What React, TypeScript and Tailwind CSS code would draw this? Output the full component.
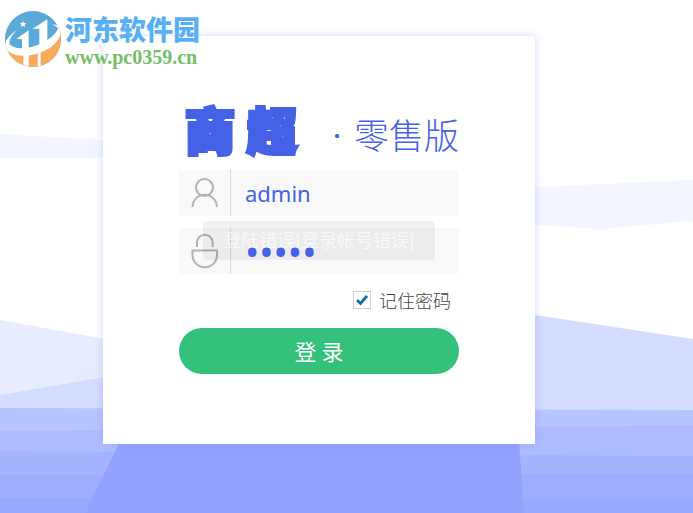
import React, { useState } from 'react';

function Backdrop() {
  return (
    <svg
      className="absolute inset-0 -z-10 h-full w-full"
      viewBox="0 0 693 513"
      preserveAspectRatio="none"
      aria-hidden="true"
    >
      <rect width="693" height="513" fill="#ffffff" />
      <path d="M0 134L103 140L535 187L693 180V221L600 229L535 225L103 158H0Z" fill="#f3f6ff" />
      <path d="M0 320L320 378V410H0Z" fill="#e8ecff" />
      <path d="M0 395L320 340L535 315L693 339V412H0Z" fill="#d4dcff" />
      <path d="M0 408L693 410V513H0Z" fill="#b9c4ff" />
      <path d="M0 431L103 430L535 427L693 425V513H0Z" fill="#afbbff" />
      <path d="M0 451L535 455L693 456V513H0Z" fill="#a6b3ff" />
      <path d="M0 475L693 474V513H0Z" fill="#9fadff" />
      <path d="M0 498L693 499V513H0Z" fill="#99a8ff" />
      <path d="M128 425H518L524 513H85Z" fill="#93a2ff" />
    </svg>
  );
}

function SiteLogo() {
  return (
    <svg className="h-14 w-14 shrink-0" viewBox="9 9 168 168" aria-hidden="true">
      <clipPath id="disc">
        <circle cx="93" cy="93" r="84" />
      </clipPath>
      <g clipPath="url(#disc)">
        <rect x="9" y="9" width="168" height="168" fill="#5ba9d8" />
        <path d="M9 118Q60 160 120 128Q165 105 177 70V177H9Z" fill="#f8ab5a" />
        <g fill="#ffffff">
          <path d="M8 112Q10 90 44 66Q20 92 22 108Q40 128 90 116Q150 98 168 62Q165 56 150 48Q180 52 179 72Q170 108 125 130Q60 156 22 132Q8 124 8 112Z" />
          <path d="M44 92L80 67V124H60V94Z" />
          <path d="M92 62L136 34V114H112V62Z" />
          <path d="M64 138H80V177H64ZM107 130H116V177H107Z" />
          <path d="M63 39L66 45L73 46L68 50L69 57L63 53L57 57L58 50L53 46L60 45Z" />
        </g>
      </g>
    </svg>
  );
}

function UserIcon() {
  return (
    <svg className="h-8 w-8" viewBox="0 0 32 32" fill="none" stroke="#b2b2b2" strokeWidth="2" aria-hidden="true">
      <circle cx="15.500" cy="10.500" r="8.500" />
      <path d="M3.500 30a12.200 12.200 0 0 1 24.400 0" />
    </svg>
  );
}

function LockIcon() {
  return (
    <svg className="h-9 w-8" viewBox="0 0 32 36" fill="none" stroke="#b2b2b2" strokeWidth="2" aria-hidden="true">
      <path d="M8 14V9.500a7.800 7.800 0 0 1 15.600 0V14" />
      <path d="M3.500 17.500h24.500v4.500a12.250 12.250 0 0 1 -24.500 0Z" />
    </svg>
  );
}

interface FieldProps {
  id: string;
  label: string;
  type: string;
  value: string;
  icon: React.ReactNode;
  onChange: (value: string) => void;
}

function Field({ id, label, type, value, icon, onChange }: FieldProps) {
  return (
    <div className="flex h-[46px] items-stretch bg-[#f9f9f9]">
      <label htmlFor={id} aria-label={label} className="flex w-[52px] items-center justify-center border-r border-[#dcdcdc]">
        {icon}
      </label>
      <input
        id={id}
        type={type}
        value={value}
        onChange={(e) => onChange(e.target.value)}
        className={`z-10 min-w-0 flex-1 bg-transparent px-[14px] font-['Noto_Sans'] text-[#4362e4] outline-none ${type === 'password' ? 'text-[38px]' : 'text-[22px]'}`}
      />
    </div>
  );
}

export default function App() {
  const [account, setAccount] = useState('admin');
  const [password, setPassword] = useState('12345');
  const [remember, setRemember] = useState(true);

  return (
    <div className="relative isolate min-h-screen overflow-hidden font-['Noto_Sans_CJK_SC',sans-serif]">
      <Backdrop />

      {/* 站点标识 */}
      <header className="absolute top-[11px] left-[5px] z-10 flex gap-1">
        <SiteLogo />
        <div className="flex flex-col">
          <span className="text-[27px] leading-9 font-black text-[#58b0f4]">河东软件园</span>
          <span className="font-['Liberation_Serif',serif] text-[20px] leading-5 font-bold text-[#75bd66]">www.pc0359.cn</span>
        </div>
      </header>

      <main className="px-[103px] pt-9 pb-[69px]">
        <form
          onSubmit={(e) => e.preventDefault()}
          className="flex w-[432px] flex-col bg-white px-[76px] pt-[71px] pb-[70px] shadow-[0_0_8px_rgba(120,130,255,0.3)]"
        >
          <h1 className="flex h-[46px] items-end text-[#4562e6]">
            <span className="flex h-[46px] w-[124px] items-start justify-around text-[50px] leading-[42px] font-black [-webkit-text-stroke:4px_#4562e6]">
              <span>商</span>
              <span>超</span>
            </span>
            <span className="flex flex-1 justify-end gap-1.5 text-[35px] leading-[38px] font-light">
              <span className="text-[22px]">·</span>
              零售版
            </span>
          </h1>

          <div className="relative mt-[17px] flex flex-col gap-3">
            <Field id="account" label="账号" type="text" value={account} icon={<UserIcon />} onChange={setAccount} />
            <Field id="password" label="密码" type="password" value={password} icon={<LockIcon />} onChange={setPassword} />
            {/* 错误提示 */}
            <div role="alert" className="absolute top-[51px] left-6 flex h-[39px] w-[232px] items-center justify-center rounded bg-black/5 pb-1 text-lg font-light text-white/80">
              登陆错误[登录帐号错误]
            </div>
          </div>

          <label className="mt-[14px] mr-2 flex h-6 items-center gap-2 self-end text-lg font-light text-[#444444]">
            <span className="grid h-[18px] w-[18px] place-items-center">
              <input
                type="checkbox"
                checked={remember}
                onChange={(e) => setRemember(e.target.checked)}
                className="peer col-start-1 row-start-1 h-[18px] w-[18px] appearance-none border border-[#cfcfcf] bg-white"
              />
              <svg className="pointer-events-none invisible col-start-1 row-start-1 h-3 w-3 peer-checked:visible" viewBox="0 0 12 12" fill="none" stroke="#0e6fa3" strokeWidth="2.800" aria-hidden="true">
                <path d="M1 6l3.500 3.500L11 2" />
              </svg>
            </span>
            记住密码
          </label>

          <button type="submit" className="mt-4 h-[46px] rounded-full bg-[#33c17c] pb-0.5 text-[22px] leading-[44px] text-white">
            登 录
          </button>
        </form>
      </main>
    </div>
  );
}
